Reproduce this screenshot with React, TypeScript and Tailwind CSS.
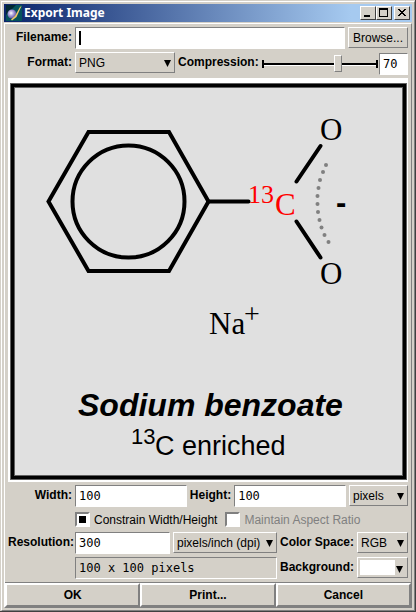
import type { ReactNode } from "react";

const sans = "font-['Liberation_Sans',Arial,sans-serif]";
const mono = "font-['DejaVu_Sans_Mono','Liberation_Mono',monospace]";
const field =
  "block h-[22px] min-w-0 rounded-none border border-t-[#808080] border-l-[#808080] border-r-white border-b-white px-[3px] text-xs text-black outline-none " +
  mono;
const raised = "border border-t-white border-l-white border-r-[#808080] border-b-[#808080]";

function Label({ htmlFor, children, className = "" }: { htmlFor: string; children: ReactNode; className?: string }) {
  return (
    <label htmlFor={htmlFor} className={`shrink-0 text-right leading-5 font-bold whitespace-nowrap ${className}`}>
      {children}
    </label>
  );
}

function Dropdown({ id, options, className = "" }: { id: string; options: string[]; className?: string }) {
  return (
    <div className={`relative h-[21px] ${className}`}>
      <select id={id} className={`block h-full w-full appearance-none rounded-none bg-[#d4d0c8] pl-[3px] text-xs outline-none ${raised}`}>
        {options.map((o) => (
          <option key={o}>{o}</option>
        ))}
      </select>
      <Arrow />
    </div>
  );
}

function Arrow() {
  return (
    <svg className="pointer-events-none absolute top-2 right-1 h-[7px] w-[7px]" viewBox="0 0 7 7" aria-hidden="true">
      <path d="M0 0H7L3.500 7Z" fill="#000" />
    </svg>
  );
}

function TitleButton({ label, children }: { label: string; children: ReactNode }) {
  return (
    <button
      type="button"
      aria-label={label}
      className="block h-[14px] w-4 border border-t-white border-l-white border-r-[#404040] border-b-[#404040] bg-[#d4d0c8]"
    >
      <svg className="block h-3 w-[14px]" viewBox="0 0 14 12" fill="none" stroke="#000" shapeRendering="crispEdges">
        {children}
      </svg>
    </button>
  );
}

const dots = [
  [326, 165], [323, 172], [320, 180], [318.5, 188], [317.5, 196], [317.5, 204],
  [318, 212], [319.5, 220], [321.5, 227.5], [324.5, 235], [328.5, 242],
];

function Structure() {
  return (
    <svg className="block h-auto w-full" viewBox="10 83 397 397" role="img" aria-label="Sodium benzoate structure">
      <rect x="10" y="83" width="397" height="397" fill="#606060" />
      <rect x="11" y="84" width="395" height="395" fill="#000" />
      <rect x="14" y="87" width="389" height="389" fill="#606060" />
      <rect x="15" y="88" width="387" height="387" fill="#e0e0e0" />
      <g fill="none" stroke="#000" strokeWidth="4">
        <path d="M48.500 201.500L88.500 132H169L208.500 201.500L169 271H88.500Z" />
        <circle cx="128.500" cy="201.500" r="56" />
        <path d="M208 201.500H248.500M296.500 181.500L320.500 146M296.500 221.500L320.500 257.500" strokeLinecap="round" />
      </g>
      {dots.map(([x, y]) => (
        <circle key={y} cx={x} cy={y} r="2" fill="#808080" />
      ))}
      <g className="font-['Liberation_Serif','Times_New_Roman',serif]" fontSize="31">
        <text x="320" y="140">O</text>
        <text x="320" y="284">O</text>
        <text x="275" y="215" fill="#f00">C</text>
        <text x="248" y="203" fill="#f00" fontSize="26">13</text>
        <text x="209" y="334">Na</text>
        <text x="244" y="323" fontSize="28">+</text>
      </g>
      <g className={sans}>
        <text x="336" y="213" fontSize="31" fontWeight="bold">-</text>
        <text x="78" y="416" fontSize="32" fontWeight="bold" fontStyle="italic">Sodium benzoate</text>
        <text x="131" y="444" fontSize="22">13</text>
        <text x="155" y="455" fontSize="27">C enriched</text>
      </g>
    </svg>
  );
}

function Action({ children }: { children: ReactNode }) {
  return (
    <button
      type="button"
      className="h-6 flex-1 border-2 border-t-white border-l-white border-r-[#808080] border-b-[#808080] bg-[#d4d0c8] leading-5 font-bold"
    >
      {children}
    </button>
  );
}

const check =
  "block h-[15px] w-[15px] shrink-0 appearance-none border-2 border-t-[#808080] border-l-[#808080] border-r-white border-b-white bg-white checked:bg-black checked:shadow-[inset_0_0_0_2px_#fff]";

export default function App() {
  return (
    <main className={`border-r border-b border-[#404040] bg-[#d4d0c8] pt-px pl-px text-xs text-black ${sans}`}>
      <div className="border border-t-white border-l-white border-r-[#808080] border-b-[#808080] p-[2px]">
        <header className="flex h-[18px] items-center bg-linear-to-r/srgb from-[#0a246a] to-[#a6caf0] to-85% px-[2px]">
          <svg className="h-4 w-4 shrink-0" viewBox="0 0 16 16" aria-hidden="true">
            <defs>
              <radialGradient id="ball" cx="0.4" cy="0.4" r="0.6">
                <stop offset="0" stopColor="#fff" />
                <stop offset="0.5" stopColor="#a69ad8" />
                <stop offset="1" stopColor="#5a52a0" />
              </radialGradient>
            </defs>
            <rect width="16" height="16" fill="#05535c" />
            <path d="M0 0H10L0 10Z" fill="#022833" />
            <circle cx="6" cy="9" r="4.500" fill="url(#ball)" />
            <path d="M15.500 1L10.500 12L6 15.500L5 14.500L9 11L14 2Z" fill="#f0c868" />
          </svg>
          <h1 className="ml-[2px] flex-1 font-['Noto_Sans',sans-serif] text-xs font-bold text-white">Export Image</h1>
          <div className="flex">
            <TitleButton label="Minimize">
              <path d="M3 9H9" strokeWidth="2" />
            </TitleButton>
            <TitleButton label="Maximize">
              <path d="M2.500 1V10M10.500 1V10M2 9.500H11" />
              <path d="M2 2H11" strokeWidth="2" />
            </TitleButton>
            <div className="w-[2px]" />
            <TitleButton label="Close">
              <path d="M3 2L10 9M4 2L11 9M10 2L3 9M11 2L4 9" />
            </TitleButton>
          </div>
        </header>

        <form className="mt-px border border-t-white border-l-white border-r-[#808080] border-b-[#808080]" onSubmit={(e) => e.preventDefault()}>
          <div className="flex flex-col gap-[3px] p-[3px]">
            <div className="flex items-start gap-[3px]">
              <Label htmlFor="filename" className="w-16">Filename:</Label>
              <div className="relative flex-1">
                <input id="filename" type="text" className={`${field} w-full bg-white`} />
                <span className="pointer-events-none absolute top-1 left-1 h-[14px] w-[2px] bg-black" />
              </div>
              <button type="button" className={`h-[21px] w-[60px] ${raised}`}>Browse...</button>
            </div>

            <div className="flex h-[23px] items-start gap-[3px]">
              <Label htmlFor="format" className="w-16">Format:</Label>
              <Dropdown id="format" className="w-[100px]" options={["PNG", "JPEG", "TIFF"]} />
              <Label htmlFor="compression">Compression:</Label>
              <div className="relative h-[21px] flex-1">
                <div className="absolute -right-[2px] left-0 top-2 flex h-2 items-center border-x-2 border-black">
                  <div className="h-[3px] w-full border-b border-white bg-black" />
                </div>
                <input
                  id="compression"
                  type="range"
                  min="0"
                  max="100"
                  defaultValue="70"
                  className="absolute top-[3px] left-0 block h-[17px] w-[calc(100%-3px)] appearance-none bg-transparent [&::-webkit-slider-thumb]:h-[17px] [&::-webkit-slider-thumb]:w-2 [&::-webkit-slider-thumb]:appearance-none [&::-webkit-slider-thumb]:border [&::-webkit-slider-thumb]:border-t-white [&::-webkit-slider-thumb]:border-r-[#808080] [&::-webkit-slider-thumb]:border-b-[#808080] [&::-webkit-slider-thumb]:border-l-white [&::-webkit-slider-thumb]:bg-[#d4d0c8]"
                />
              </div>
              <input type="text" aria-label="Compression value" defaultValue="70" className={`${field} w-[29px] self-end bg-white`} />
            </div>

            <div className="bg-white pt-[5px] pr-px pb-[2px] pl-[2px]">
              <Structure />
            </div>

            <div className="flex items-start gap-[3px]">
              <Label htmlFor="width" className="w-16">Width:</Label>
              <input id="width" type="text" defaultValue="100" className={`${field} w-0 flex-1 bg-white`} />
              <Label htmlFor="height">Height:</Label>
              <input id="height" type="text" defaultValue="100" className={`${field} w-0 flex-1 bg-white`} />
              <Dropdown id="unit" className="w-[59px]" options={["pixels", "inches", "cm"]} />
            </div>

            <div className="flex h-[19px] items-center gap-1 pl-[67px]">
              <input id="constrain" type="checkbox" defaultChecked className={check} />
              <label htmlFor="constrain" className="mr-1 whitespace-nowrap">Constrain Width/Height</label>
              <input id="aspect" type="checkbox" disabled className={check} />
              <label htmlFor="aspect" className="whitespace-nowrap text-[#808080]">Maintain Aspect Ratio</label>
            </div>

            <div className="grid grid-cols-[64px_1fr_74px_51px] gap-[3px]">
              <Label htmlFor="resolution">Resolution:</Label>
              <div className="flex gap-[3px]">
                <input id="resolution" type="text" defaultValue="300" className={`${field} w-0 flex-1 bg-white`} />
                <Dropdown id="resunit" className="w-[104px]" options={["pixels/inch (dpi)", "pixels/cm"]} />
              </div>
              <Label htmlFor="space">Color Space:</Label>
              <Dropdown id="space" options={["RGB", "CMYK"]} />

              <input type="text" aria-label="Output size" readOnly value="100 x 100 pixels" className={`${field} col-start-2 bg-[#d4d0c8]`} />
              <Label htmlFor="background">Background:</Label>
              <button id="background" type="button" aria-label="Background: white" className={`relative h-[21px] p-[2px] pr-3 ${raised}`}>
                <span className="block h-full bg-white" />
                <Arrow />
              </button>
            </div>
          </div>
          <div className="flex border-t border-[#808080]">
            <Action>OK</Action>
            <Action>Print...</Action>
            <Action>Cancel</Action>
          </div>
        </form>
      </div>
    </main>
  );
}
